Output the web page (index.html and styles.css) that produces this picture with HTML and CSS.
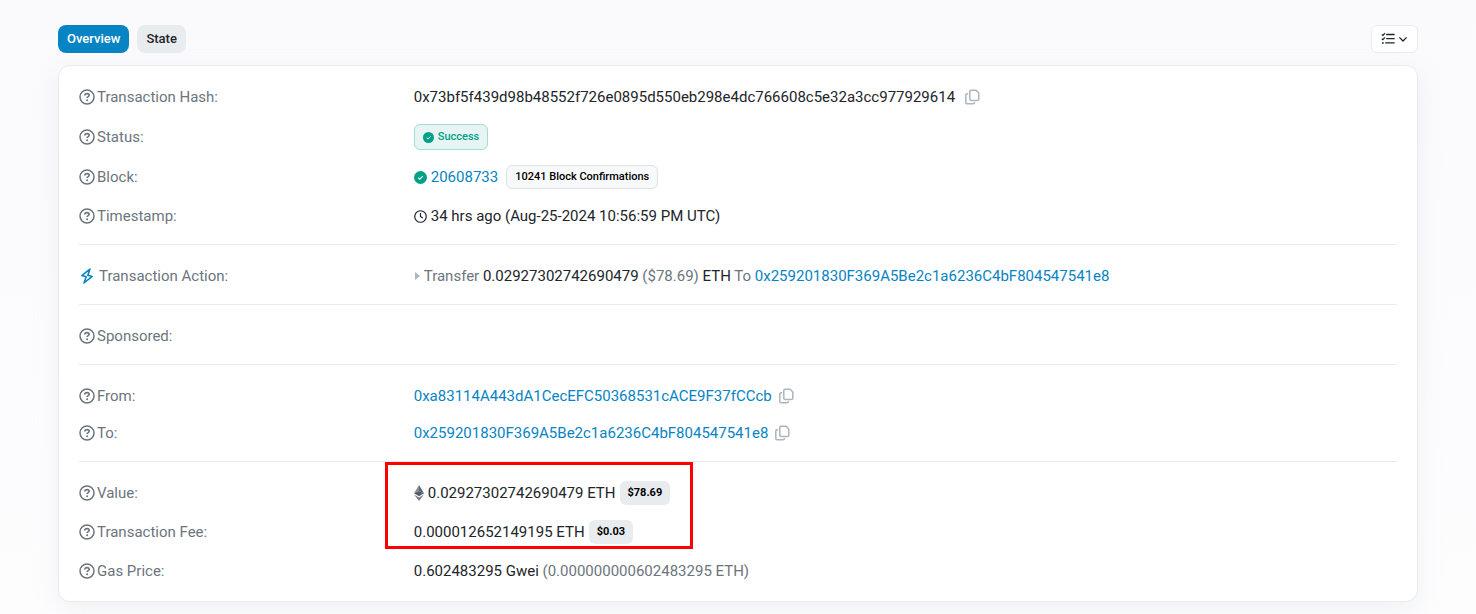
FILE: index.html
```html
<!DOCTYPE html>
<html lang="en">
<head>
    <meta charset="UTF-8">
    <meta name="viewport" content="width=device-width, initial-scale=1.0">
    <title>Transaction Details</title>
    <link rel="stylesheet" href="styles.css">
</head>
<body>

    <!-- shared icons -->
    <svg class="sprite" aria-hidden="true">
        <symbol id="i-help" viewBox="0 0 16 16">
            <circle cx="8" cy="8" r="7" fill="none" stroke="currentColor" stroke-width="1.5"/>
            <path d="M5.8 6.4c0-1.1.8-1.8 2.2-1.8s2.2.7 2.2 1.7c0 1.3-2.1 1.3-2.1 2.7" fill="none" stroke="currentColor" stroke-width="1.6"/>
            <circle cx="8.1" cy="11.2" r="1" fill="currentColor"/>
        </symbol>
        <symbol id="i-copy" viewBox="0 0 16 16">
            <path d="M7 1.2h5l2.8 2.8v6.2a1.2 1.2 0 0 1-1.2 1.2H7a1.2 1.2 0 0 1-1.2-1.2V2.4A1.2 1.2 0 0 1 7 1.2z" fill="none" stroke="currentColor" stroke-width="1.5"/>
            <path d="M4.2 4.7H3a1.2 1.2 0 0 0-1.2 1.2v7.7a1.2 1.2 0 0 0 1.2 1.2h6.2a1.2 1.2 0 0 0 1.2-1.2v-.5" fill="none" stroke="currentColor" stroke-width="1.5"/>
        </symbol>
        <symbol id="i-check" viewBox="0 0 14 14">
            <circle cx="7" cy="7" r="7" fill="currentColor"/>
            <path d="M4.6 7.2l1.7 1.6 3.2-3.2" fill="none" stroke="#fff" stroke-width="1.2"/>
        </symbol>
    </svg>

    <div class="container">
        <nav class="toolbar">
            <div class="tabs">
                <button type="button" class="tab active">Overview</button>
                <button type="button" class="tab">State</button>
            </div>
            <button type="button" class="menu-btn" aria-label="View options">
                <svg width="14" height="14" viewBox="0 0 14 14" fill="none" stroke="currentColor" stroke-width="1.3">
                    <path d="M5.2 2.5H13.6M5.2 6.7H13.6M4.2 10.9H13.6"/>
                    <path d="M.8 2.5l1.1 1L4 1.1M.8 6.7l1.1 1L4 5.3" stroke-width="1.2"/>
                    <circle cx="1.9" cy="10.9" r=".9" fill="currentColor" stroke="none"/>
                </svg>
                <svg width="10" height="10" viewBox="0 0 10 10" fill="none" stroke="currentColor" stroke-width="1.3">
                    <path d="M1.4 3.4L5 7l3.6-3.6"/>
                </svg>
            </button>
        </nav>

        <main class="card">
            <section class="group">
                <div class="row">
                    <div class="label"><svg class="icon-md"><use href="#i-help"/></svg>Transaction Hash:</div>
                    <div class="value">
                        <span>0x73bf5f439d98b48552f726e0895d550eb298e4dc766608c5e32a3cc977929614</span>
                        <button type="button" class="copy wide" aria-label="Copy hash"><svg class="icon-md"><use href="#i-copy"/></svg></button>
                    </div>
                </div>
                <div class="row">
                    <div class="label"><svg class="icon-md"><use href="#i-help"/></svg>Status:</div>
                    <div class="value">
                        <span class="badge success"><svg class="icon-xs"><use href="#i-check"/></svg>Success</span>
                    </div>
                </div>
                <div class="row">
                    <div class="label"><svg class="icon-md"><use href="#i-help"/></svg>Block:</div>
                    <div class="value">
                        <svg class="icon-sm green"><use href="#i-check"/></svg>
                        <a href="#">20608733</a>
                        <span class="badge outline">10241 Block Confirmations</span>
                    </div>
                </div>
                <div class="row">
                    <div class="label"><svg class="icon-md"><use href="#i-help"/></svg>Timestamp:</div>
                    <div class="value">
                        <svg class="icon-sm" viewBox="0 0 14 14" fill="none" stroke="currentColor" stroke-width="1.3">
                            <circle cx="7" cy="7" r="6.2"/>
                            <path d="M7 3.3V7l2.5 1.7"/>
                        </svg>
                        <span>34 hrs ago (Aug-25-2024 10:56:59 PM UTC)</span>
                    </div>
                </div>
            </section>

            <section class="group">
                <div class="row">
                    <div class="label action">
                        <svg class="icon-md" viewBox="0 0 16 16" fill="none" stroke="currentColor" stroke-width="1.6" stroke-linejoin="round">
                            <path d="M11 1L2.8 7.6l4.4 1.2L5 15l8.2-6.6-4.4-1.2z"/>
                        </svg>
                        Transaction Action:
                    </div>
                    <div class="value">
                        <svg class="caret" viewBox="0 0 6 10"><path d="M1 1l5 4-5 4z" fill="currentColor"/></svg>
                        <span><span class="muted">Transfer</span> 0.02927302742690479 <span class="muted">($78.69)</span> ETH <span class="muted">To</span> <a href="#">0x259201830F369A5Be2c1a6236C4bF804547541e8</a></span>
                    </div>
                </div>
            </section>

            <section class="group">
                <div class="row">
                    <div class="label"><svg class="icon-md"><use href="#i-help"/></svg>Sponsored:</div>
                    <div class="value"></div>
                </div>
            </section>

            <section class="group parties">
                <div class="row">
                    <div class="label"><svg class="icon-md"><use href="#i-help"/></svg>From:</div>
                    <div class="value">
                        <a href="#">0xa83114A443dA1CecEFC50368531cACE9F37fCCcb</a>
                        <button type="button" class="copy" aria-label="Copy sender"><svg class="icon-md"><use href="#i-copy"/></svg></button>
                    </div>
                </div>
                <div class="row">
                    <div class="label"><svg class="icon-md"><use href="#i-help"/></svg>To:</div>
                    <div class="value">
                        <a href="#">0x259201830F369A5Be2c1a6236C4bF804547541e8</a>
                        <button type="button" class="copy" aria-label="Copy recipient"><svg class="icon-md"><use href="#i-copy"/></svg></button>
                    </div>
                </div>
            </section>

            <section class="group">
                <div class="row">
                    <div class="label"><svg class="icon-md"><use href="#i-help"/></svg>Value:</div>
                    <div class="value">
                        <svg class="eth" viewBox="0 0 10 16">
                            <path d="M5 0L0 8.2l5-2.2z" fill="#8a9096"/>
                            <path d="M5 0l5 8.2L5 6z" fill="#5d656c"/>
                            <path d="M0 8.2L5 6l5 2.2-5 3z" fill="#565e65"/>
                            <path d="M0 9.4l5 3 5-3L5 16z" fill="#777e85"/>
                        </svg>
                        <span>0.02927302742690479 ETH</span>
                        <span class="badge price">$78.69</span>
                        <div class="marker"></div>
                    </div>
                </div>
                <div class="row">
                    <div class="label"><svg class="icon-md"><use href="#i-help"/></svg>Transaction Fee:</div>
                    <div class="value">
                        <span>0.000012652149195 ETH</span>
                        <span class="badge price">$0.03</span>
                    </div>
                </div>
                <div class="row">
                    <div class="label"><svg class="icon-md"><use href="#i-help"/></svg>Gas Price:</div>
                    <div class="value">
                        <span>0.602483295 Gwei <span class="muted">(0.000000000602483295 ETH)</span></span>
                    </div>
                </div>
            </section>
        </main>
    </div>

</body>
</html>
```
FILE: styles.css
```css
:root {
    --text: #212529;
    --muted: #6c757d;
    --link: #0784c3;
    --green: #00a186;
    --border: #e9ecef;
}

* {
    box-sizing: border-box;
}

body {
    margin: 0;
    min-height: 100vh;
    font-family: Roboto, "Liberation Sans", sans-serif;
    font-size: 15px;
    line-height: 24px;
    color: var(--text);
    background: linear-gradient(#fafafd, #fdfdfe);
}

button {
    font-family: inherit;
    cursor: pointer;
}

a {
    color: var(--link);
    text-decoration: none;
}

svg {
    flex: none;
}

.sprite {
    position: absolute;
    width: 0;
    height: 0;
}

.container {
    max-width: 1408px;
    margin: 0 auto;
    padding: 25px 24px 12px;
}

/* tabs */
.toolbar,
.tabs {
    display: flex;
    gap: 8px;
}

.toolbar {
    justify-content: space-between;
    margin-bottom: 12px;
}

.tab {
    height: 28px;
    padding: 0 9px 1px;
    border: 0;
    border-radius: 8px;
    font-size: 13px;
    font-weight: 500;
    color: var(--text);
    background: var(--border);
}

.tab.active {
    color: #fff;
    background: var(--link);
}

.menu-btn {
    display: flex;
    align-items: center;
    gap: 3px;
    height: 28px;
    padding: 0 9px;
    border: 1px solid var(--border);
    border-radius: 6px;
    color: var(--text);
    background: #fff;
}

/* details card */
.card {
    padding: 0 20px 2px;
    border: 1px solid var(--border);
    border-radius: 12px;
    background: #fff;
    box-shadow: 0 8px 24px rgba(189, 197, 209, 0.2);
}

.group {
    display: flex;
    flex-direction: column;
    gap: 15px;
    padding: 19px 0 16px;
}

.group.parties {
    gap: 13px;
}

.group + .group {
    border-top: 1px solid var(--border);
}

.row {
    display: grid;
    grid-template-columns: 1fr 3fr;
    column-gap: 7px;
    align-items: center;
}

.label,
.value {
    display: flex;
    align-items: center;
    min-height: 24px;
}

.label {
    gap: 2px;
    color: var(--muted);
}

.label.action {
    gap: 4px;
}

.label.action svg {
    color: var(--link);
}

.value {
    position: relative;
    gap: 4px;
}

.muted {
    color: var(--muted);
}

.green {
    color: var(--green);
}

.icon-md {
    width: 16px;
    height: 16px;
}

.icon-sm {
    width: 13px;
    height: 13px;
}

.icon-xs {
    width: 11px;
    height: 11px;
}

.caret {
    width: 6px;
    height: 10px;
    color: #adb5bd;
}

.eth {
    width: 10px;
    height: 16px;
}

.copy {
    display: flex;
    padding: 0 2px;
    border: 0;
    color: #adb5bd;
    background: none;
}

.copy.wide {
    padding: 0 5px;
}

/* badges */
.badge {
    display: inline-flex;
    align-items: center;
    height: 24px;
    padding: 0 8px;
    border-radius: 6px;
    font-size: 11px;
    font-weight: 500;
}

.badge.success {
    gap: 4px;
    height: 26px;
    border: 1px solid #a3ddd3;
    color: var(--green);
    background: #e6f5f3;
}

.badge.outline {
    margin-left: 4px;
    border: 1px solid #dee2e6;
    color: #000;
    background: #f8f9fa;
}

.badge.price {
    font-weight: 700;
    color: #000;
    background: var(--border);
}

/* red frame round value and fee */
.marker {
    position: absolute;
    top: -19px;
    left: -29px;
    width: 308px;
    height: 87px;
    border: 3px solid #f00;
    pointer-events: none;
}
```
